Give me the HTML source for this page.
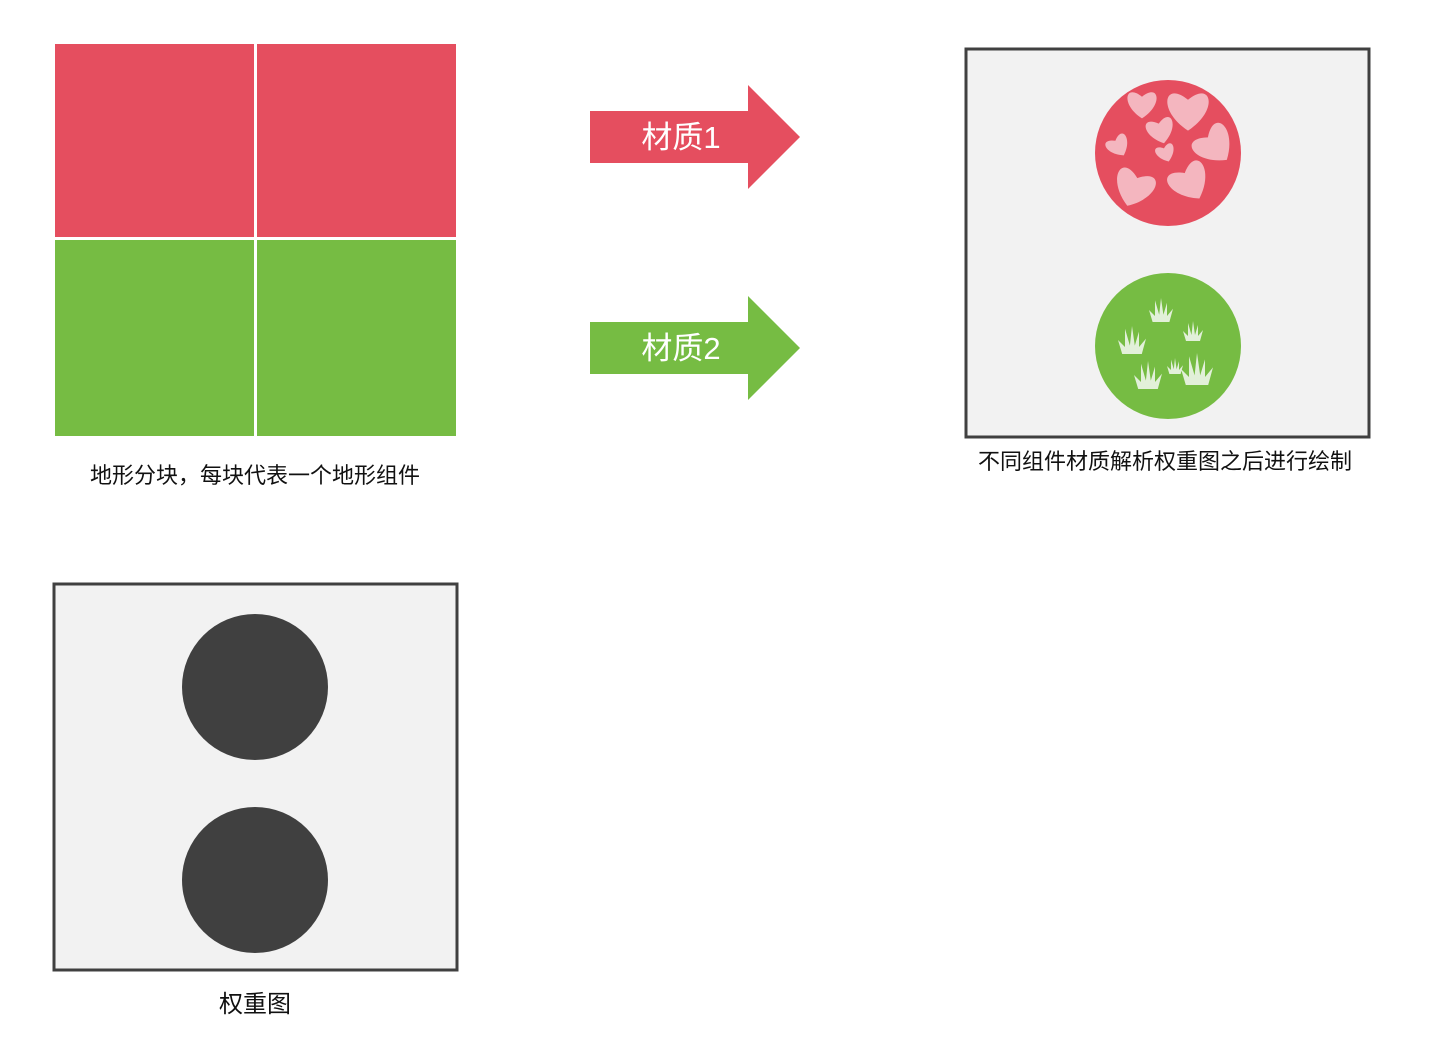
<!DOCTYPE html>
<html><head><meta charset="utf-8"><style>
html,body{margin:0;padding:0;background:#fff;width:1442px;height:1048px;overflow:hidden}
svg{display:block}
text{font-family:"Liberation Sans","Noto Sans CJK SC",sans-serif}
</style></head><body>
<svg width="1442" height="1048" viewBox="0 0 1442 1048" xmlns="http://www.w3.org/2000/svg">
<defs>
<path id="h" d="M0,0.4 C-0.7,-0.05 -0.55,-0.75 0,-0.3 C0.55,-0.75 0.7,-0.05 0,0.4Z" fill="#f4b6bf"/>
<path id="g" d="M3,20 L0,10 L5,15 L5,2 L8.5,14 L10,0 L12,14 L15,4 L15,15 L20,9 L17,20Z" fill="#e2f0d9"/>
</defs>
<rect x="55" y="44" width="199" height="193" fill="#e54e5f"/>
<rect x="257" y="44" width="199" height="193" fill="#e54e5f"/>
<rect x="55" y="240" width="199" height="196" fill="#76bc43"/>
<rect x="257" y="240" width="199" height="196" fill="#76bc43"/>
<text x="255" y="483" font-size="22" text-anchor="middle" fill="#111">地形分块，每块代表一个地形组件</text>

<path d="M590,111 H748 V85 L800,137 L748,189 V163 H590Z" fill="#e54e5f"/>
<text x="681" y="148" font-size="31" text-anchor="middle" fill="#fff">材质1</text>
<path d="M590,322 H748 V296 L800,348 L748,400 V374 H590Z" fill="#76bc43"/>
<text x="681" y="359" font-size="31" text-anchor="middle" fill="#fff">材质2</text>

<rect x="966" y="49" width="403" height="388" fill="#f2f2f2" stroke="#404040" stroke-width="3"/>
<circle cx="1168" cy="153" r="73" fill="#e54e5f"/>
<use href="#h" transform="translate(1142,106) scale(31)"/>
<use href="#h" transform="translate(1188,113) scale(44)"/>
<use href="#h" transform="translate(1161,132) rotate(-15) scale(29)"/>
<use href="#h" transform="translate(1119,147) rotate(-30) scale(24)"/>
<use href="#h" transform="translate(1166,154) rotate(-20) scale(20)"/>
<use href="#h" transform="translate(1216,147) rotate(-40) scale(42)"/>
<use href="#h" transform="translate(1133,190) rotate(20) scale(42)"/>
<use href="#h" transform="translate(1191,184) rotate(-30) scale(42)"/>
<circle cx="1168" cy="346" r="73" fill="#76bc43"/>
<use href="#g" transform="translate(1149,298) scale(1.2)"/>
<use href="#g" transform="translate(1118,326) scale(1.4)"/>
<use href="#g" transform="translate(1183,321) scale(1.0)"/>
<use href="#g" transform="translate(1134,361) scale(1.4)"/>
<use href="#g" transform="translate(1167,358) scale(0.8)"/>
<use href="#g" transform="translate(1181,353) scale(1.6)"/>
<text x="1165" y="469" font-size="22" text-anchor="middle" fill="#111">不同组件材质解析权重图之后进行绘制</text>

<rect x="54" y="584" width="403" height="386" fill="#f2f2f2" stroke="#404040" stroke-width="3"/>
<circle cx="255" cy="687" r="73" fill="#404040"/>
<circle cx="255" cy="880" r="73" fill="#404040"/>
<text x="255" y="1012" font-size="24" text-anchor="middle" fill="#111">权重图</text>
</svg>
</body></html>
